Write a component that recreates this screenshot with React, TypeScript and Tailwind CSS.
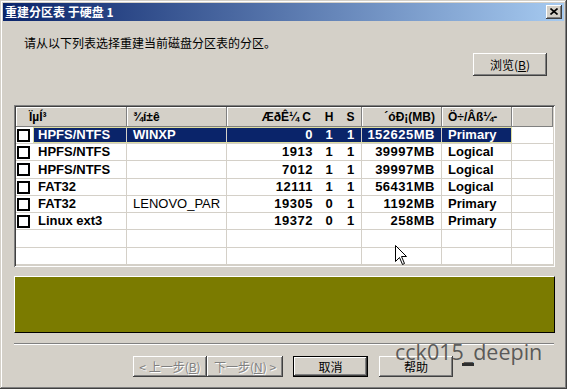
import React from "react";

const raised =
  "bg-[#d4d0c8] shadow-[inset_-1px_-1px_#404040,inset_1px_1px_#ffffff,inset_-2px_-2px_#808080]";
const headCell =
  "h-full flex items-center bg-[#d4d0c8] shadow-[inset_-1px_-1px_#808080,inset_1px_1px_#ffffff]";
const cjk = "font-['Noto_Sans_CJK_SC','Noto_Sans_CJK_JP',sans-serif]";
const latin = "font-['Liberation_Sans',Arial,sans-serif]";

type Row = {
  fs: string;
  label: string;
  c: string;
  h: string;
  s: string;
  size: string;
  type: string;
  sel?: boolean;
  thin?: boolean;
  hc: string;
};

const rows: Row[] = [
  { fs: "HPFS/NTFS", label: "WINXP", c: "0", h: "1", s: "1", size: "152625MB", type: "Primary", sel: true, hc: "h-[17px]" },
  { fs: "HPFS/NTFS", label: "", c: "1913", h: "1", s: "1", size: "39997MB", type: "Logical", hc: "h-[17px]" },
  { fs: "HPFS/NTFS", label: "", c: "7012", h: "1", s: "1", size: "39997MB", type: "Logical", hc: "h-[18px]" },
  { fs: "FAT32", label: "", c: "12111", h: "1", s: "1", size: "56431MB", type: "Logical", hc: "h-[17px]" },
  { fs: "FAT32", label: "LENOVO_PAR", c: "19305", h: "0", s: "1", size: "1192MB", type: "Primary", thin: true, hc: "h-[17px]" },
  { fs: "Linux ext3", label: "", c: "19372", h: "0", s: "1", size: "258MB", type: "Primary", hc: "h-[17px]" },
  { fs: "", label: "", c: "", h: "", s: "", size: "", type: "", hc: "h-[18px]" },
  { fs: "", label: "", c: "", h: "", s: "", size: "", type: "", hc: "h-[17px]" },
];

function ListRow({ r, empty }: { r: Row; empty: boolean }) {
  const sel = !!r.sel;
  const hl = sel ? "bg-[#0a246a] text-white" : "text-black";
  const grid = "border-r border-[#d4d0c8]";
  return (
    <div className={`relative flex ${r.hc} border-b border-[#d4d0c8] text-[13px] font-bold ${latin}`}>
      <div className={`w-[111px] h-full flex items-center ${grid}`}>
        {!empty && (
          <div className="ml-[1px] w-[13px] h-[13px] border-2 border-black bg-white shrink-0" />
        )}
        {!empty && (
          <div className={`ml-[3px] flex-1 h-full flex items-center pl-[5px] whitespace-nowrap ${hl}`}>
            {r.fs}
          </div>
        )}
      </div>
      <div
        className={`w-[100px] h-full flex items-center pl-[6px] whitespace-nowrap overflow-hidden ${grid} ${hl} ${
          r.thin ? "font-normal" : ""
        }`}
      >
        {r.label}
      </div>
      <div className={`w-[91px] h-full flex items-center justify-end pr-[5px] tracking-[0.5px] ${hl}`}>{r.c}</div>
      <div className={`w-[22px] h-full flex items-center justify-center ${hl}`}>{r.h}</div>
      <div className={`w-[22px] h-full flex items-center justify-center ${grid} ${hl}`}>{r.s}</div>
      <div className={`w-[80px] h-full flex items-center justify-end pr-[6px] tracking-[0.5px] ${grid} ${hl}`}>
        {r.size}
      </div>
      <div className={`w-[70px] h-full flex items-center pl-[6px] ${grid} ${hl}`}>{r.type}</div>
      <div className="flex-1 h-full" />
      {sel && (
        <div className="absolute left-[17px] top-0 w-[479px] h-[16px] border border-[#dcdca0] pointer-events-none" />
      )}
    </div>
  );
}

function Btn({
  children,
  w,
  extra = "",
}: {
  children: React.ReactNode;
  w: string;
  extra?: string;
}) {
  return (
    <div className={`${w} h-full flex items-center justify-center ${raised} ${extra}`}>{children}</div>
  );
}

export default function App() {
  return (
    <div
      className={`relative w-[567px] h-[389px] overflow-hidden bg-[#d4d0c8] p-[3px] flex flex-col shadow-[inset_-1px_-1px_#404040,inset_1px_1px_#d4d0c8,inset_-2px_-2px_#808080,inset_2px_2px_#ffffff] ${cjk}`}
    >
      {/* Title bar */}
      <div className="h-[18px] w-full flex items-center justify-between pl-[2px] pr-[2px] bg-[linear-gradient(to_right,#0a246a,#a6caf0)]">
        <span className="text-white text-[12px] font-bold leading-none whitespace-nowrap">
          重建分区表 于硬盘 1
        </span>
        <div className={`w-[16px] h-[14px] flex items-center justify-center ${raised}`}>
          <svg width="8" height="7" viewBox="0 0 8 7" className="mb-[1px]">
            <path d="M0.5 0.5 L7.5 6.5 M7.5 0.5 L0.5 6.5" stroke="#000" strokeWidth="1.6" fill="none" />
          </svg>
        </div>
      </div>

      {/* Instruction */}
      <div className="mt-[16px] ml-[21px] text-[12px] leading-[12px] text-black whitespace-nowrap">
        请从以下列表选择重建当前磁盘分区表的分区。
      </div>

      {/* Browse */}
      <div className="mt-[4px] flex justify-end pr-[17px] h-[23px]">
        <Btn w="w-[74px]">
          <span className="text-[12px] leading-none text-black">
            浏览(<span className="underline">B</span>)
          </span>
        </Btn>
      </div>

      {/* List */}
      <div className="mt-[29px] ml-[11px] w-[541px] h-[162px] p-[2px] bg-white overflow-hidden shadow-[inset_1px_1px_#808080,inset_-1px_-1px_#ffffff,inset_2px_2px_#404040,inset_-2px_-2px_#d4d0c8]">
        <div className="w-full h-full overflow-hidden bg-white">
          <div className={`flex h-[20px] text-[12px] font-bold text-black ${latin}`}>
            <div className={`w-[111px] pl-[13px] ${headCell}`}>ÏµÍ³</div>
            <div className={`w-[100px] pl-[6px] ${headCell}`}>¾í±ê</div>
            <div className={`w-[135px] ${headCell}`}>
              <div className="w-[91px] text-right pr-[7px] whitespace-nowrap">ÆðÊ¼ C</div>
              <div className="w-[22px] text-center">H</div>
              <div className="w-[21px] text-center">S</div>
            </div>
            <div className={`w-[80px] justify-end pr-[7px] whitespace-nowrap ${headCell}`}>´óÐ¡(MB)</div>
            <div className={`w-[70px] pl-[6px] whitespace-nowrap ${headCell}`}>Ö÷/Âß¼-</div>
            <div className={`flex-1 ${headCell}`} />
          </div>
          {rows.map((r, i) => (
            <ListRow key={i} r={r} empty={r.fs === ""} />
          ))}
        </div>
      </div>

      {/* Olive panel */}
      <div className="mt-[9px] ml-[11px] w-[541px] h-[57px] bg-[#7b7b00] border-t border-l border-white border-b border-r border-b-black border-r-black" />

      {/* Separator */}
      <div className="mt-[10px] ml-[11px] w-[540px] h-[2px] border-t border-[#808080] border-b border-b-white" />

      {/* Buttons */}
      <div className="mt-[11px] h-[21px] flex pl-[130px] text-[12px] leading-none">
        <Btn w="w-[74px]">
          <span className="text-[#808080] [text-shadow:1px_1px_0_#ffffff] whitespace-nowrap">
            &lt; 上一步(<span className="underline">B</span>)
          </span>
        </Btn>
        <Btn w="w-[76px]">
          <span className="text-[#808080] [text-shadow:1px_1px_0_#ffffff] whitespace-nowrap">
            下一步(<span className="underline">N</span>) &gt;
          </span>
        </Btn>
        <div className="ml-[10px] w-[75px] h-full border border-black">
          <div className={`w-full h-full flex items-center justify-center ${raised}`}>
            <span className="text-black">取消</span>
          </div>
        </div>
        <Btn w="w-[74px]" extra="ml-[11px]">
          <span className="text-black">帮助</span>
        </Btn>
      </div>

      {/* Overlays: watermark, dash, cursor */}
      <div className="absolute left-[395px] top-[341px] text-[21.5px] leading-none text-[#4a4a4a]/90 font-['Open_Sans',sans-serif] whitespace-nowrap pointer-events-none">
        cck015_deepin
      </div>
      <div className="absolute left-[462px] top-[363px] w-[12px] h-[3px] bg-[#2e2e2e]" />
      <svg className="absolute left-[395px] top-[245px]" width="13" height="21" viewBox="0 0 13 21">
        <path
          d="M0.5 0.5 V16.5 L4.5 12.5 L7.5 19.5 L9.5 18.5 L6.5 11.5 H11.5 Z"
          fill="#ffffff"
          stroke="#000000"
          strokeWidth="1"
        />
      </svg>
    </div>
  );
}
